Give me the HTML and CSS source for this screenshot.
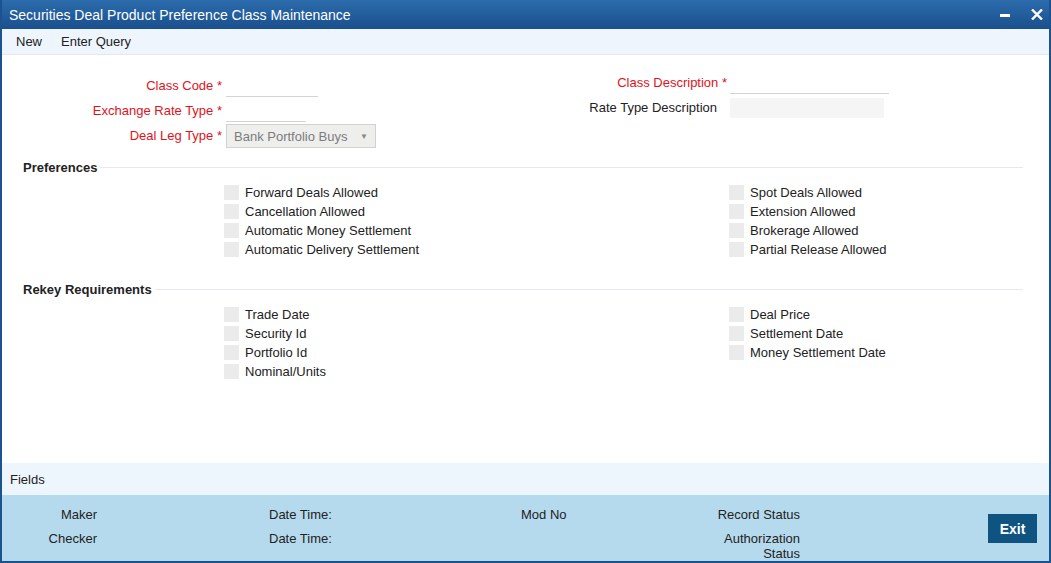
FILE: index.html
```html
<!DOCTYPE html>
<html lang="en">
<head>
    <meta charset="UTF-8">
    <title>Securities Deal Product Preference Class Maintenance</title>
    <link rel="stylesheet" href="styles.css">
</head>
<body>
<div class="window">

    <div class="titlebar">
        <span class="title">Securities Deal Product Preference Class Maintenance</span>
        <div class="win-btns">
            <svg class="btn-min" width="10" height="3" viewBox="0 0 10 3"><rect width="10" height="3" fill="#fff"/></svg>
            <svg class="btn-close" width="12" height="11" viewBox="0 0 12 11"><path d="M1 0.5 L11 10.5 M11 0.5 L1 10.5" stroke="#fff" stroke-width="2.4"/></svg>
        </div>
    </div>

    <div class="toolbar">
        <a href="#">New</a>
        <a href="#">Enter Query</a>
    </div>

    <!-- Main form -->
    <div class="content">
        <div class="top-fields">
            <div class="field-col left">
                <div class="field-row">
                    <label class="req">Class Code <span>*</span></label>
                    <input class="txt" style="width:92px">
                </div>
                <div class="field-row">
                    <label class="req">Exchange Rate Type <span>*</span></label>
                    <input class="txt" style="width:80px">
                </div>
                <div class="field-row">
                    <label class="req">Deal Leg Type <span>*</span></label>
                    <div class="select">Bank Portfolio Buys<span class="arrow">&#9660;</span></div>
                </div>
            </div>
            <div class="field-col right">
                <div class="field-row">
                    <label class="req">Class Description <span>*</span></label>
                    <input class="txt" style="width:159px">
                </div>
                <div class="field-row">
                    <label class="plain">Rate Type Description</label>
                    <div class="readonly"></div>
                </div>
            </div>
        </div>

        <div class="section-head">Preferences</div>
        <div class="check-grid">
            <div class="check-col">
                <div class="check"><span class="box"></span>Forward Deals Allowed</div>
                <div class="check"><span class="box"></span>Cancellation Allowed</div>
                <div class="check"><span class="box"></span>Automatic Money Settlement</div>
                <div class="check"><span class="box"></span>Automatic Delivery Settlement</div>
            </div>
            <div class="check-col">
                <div class="check"><span class="box"></span>Spot Deals Allowed</div>
                <div class="check"><span class="box"></span>Extension Allowed</div>
                <div class="check"><span class="box"></span>Brokerage Allowed</div>
                <div class="check"><span class="box"></span>Partial Release Allowed</div>
            </div>
        </div>

        <div class="section-head rekey">Rekey Requirements</div>
        <div class="check-grid">
            <div class="check-col">
                <div class="check"><span class="box"></span>Trade Date</div>
                <div class="check"><span class="box"></span>Security Id</div>
                <div class="check"><span class="box"></span>Portfolio Id</div>
                <div class="check"><span class="box"></span>Nominal/Units</div>
            </div>
            <div class="check-col">
                <div class="check"><span class="box"></span>Deal Price</div>
                <div class="check"><span class="box"></span>Settlement Date</div>
                <div class="check"><span class="box"></span>Money Settlement Date</div>
            </div>
        </div>
    </div>

    <div class="fields-bar">Fields</div>

    <!-- Audit footer -->
    <div class="audit">
        <div class="a-label">Maker</div>
        <div></div>
        <div>Date Time:</div>
        <div>Mod No</div>
        <div class="a-label">Record Status</div>
        <div></div>
        <div class="exit-cell"><button class="exit-btn">Exit</button></div>

        <div class="a-label">Checker</div>
        <div></div>
        <div>Date Time:</div>
        <div></div>
        <div class="a-label auth">Authorization<br>Status</div>
        <div></div>
    </div>

</div>
</body>
</html>
```

FILE: styles.css
```css
* {
    margin: 0;
    padding: 0;
    box-sizing: border-box;
    font-family: 'Liberation Sans', Arial, sans-serif;
}
body {
    background: #fff;
    color: #222;
    font-size: 13px;
}

.window {
    width: 1051px;
    height: 563px;
    display: flex;
    flex-direction: column;
    border: 2px solid #1c5290;
    border-top: none;
}

.titlebar {
    height: 29px;
    flex-shrink: 0;
    display: flex;
    align-items: center;
    justify-content: space-between;
    padding: 0 6px 0 7px;
    background: linear-gradient(#2c6cac, #1a4f8d);
    color: #fff;
}
.title {
    font-size: 14px;
}
.win-btns {
    display: flex;
    align-items: center;
    gap: 21px;
}
.btn-min {
    margin-top: 2px;
}

.toolbar {
    height: 26px;
    flex-shrink: 0;
    display: flex;
    align-items: center;
    gap: 19px;
    padding-left: 14px;
    background: #eef5fc;
    border-bottom: 1px solid #e2e8ee;
}
.toolbar a {
    color: #222;
    text-decoration: none;
}

.content {
    flex: 1;
}

.top-fields {
    display: grid;
    grid-template-columns: 505px 505px;
    padding-top: 15px;
}
.field-col.left {
    padding-top: 3px;
}
.field-row {
    height: 25px;
    display: flex;
    align-items: center;
}
.field-row label {
    width: 220px;
    text-align: right;
    margin-right: 4px;
}
.field-col.right .field-row label {
    margin-right: 3px;
}
.field-col.right .field-row label.plain {
    width: 210px;
    margin-right: 13px;
}
.req,
.req span {
    color: #e0121c;
}
.txt {
    height: 22px;
    border: none;
    border-bottom: 1px solid #d4d4d4;
    background: #fff;
    outline: none;
}
.readonly {
    width: 154px;
    height: 20px;
    background: #f5f5f5;
}
.select {
    width: 150px;
    height: 24px;
    margin-top: 1px;
    display: flex;
    align-items: center;
    justify-content: space-between;
    padding: 0 7px 0 7px;
    background: #eeeeec;
    border: 1px solid #d2d2d0;
    color: #7c7c7c;
    font-size: 13px;
}
.select .arrow {
    font-size: 8px;
    color: #888;
}

.section-head {
    display: flex;
    align-items: center;
    height: 18px;
    margin: 10px 26px 0 21px;
    font-weight: bold;
}
.section-head::after {
    content: "";
    flex: 1;
    height: 1px;
    margin-left: 3px;
    background: #e6eaee;
}
.section-head.rekey {
    margin-top: 21px;
}

.check-grid {
    display: grid;
    grid-template-columns: 505px 505px;
    margin-top: 7px;
}
.check-col {
    padding-left: 222px;
}
.check {
    height: 19px;
    display: flex;
    align-items: center;
}
.box {
    width: 15px;
    height: 15px;
    background: #ebebeb;
    margin-right: 6px;
}

.fields-bar {
    height: 32px;
    flex-shrink: 0;
    display: flex;
    align-items: center;
    padding-left: 8px;
    background: #eef6fd;
}

.audit {
    height: 66px;
    flex-shrink: 0;
    display: grid;
    grid-template-columns: 95px 172px 252px 131px 148px 1fr auto;
    grid-template-rows: 24px 24px;
    padding-top: 8px;
    background: #b6daed;
    color: #222;
    line-height: 24px;
}
.a-label {
    text-align: right;
}
.auth {
    line-height: 15px;
    padding-top: 4px;
}
.exit-cell {
    grid-row: span 2;
    padding: 11px 12px 0 0;
}
.exit-btn {
    width: 49px;
    height: 29px;
    border: none;
    background: #0f5480;
    color: #fff;
    font-size: 14px;
    font-weight: bold;
    cursor: pointer;
}
```
